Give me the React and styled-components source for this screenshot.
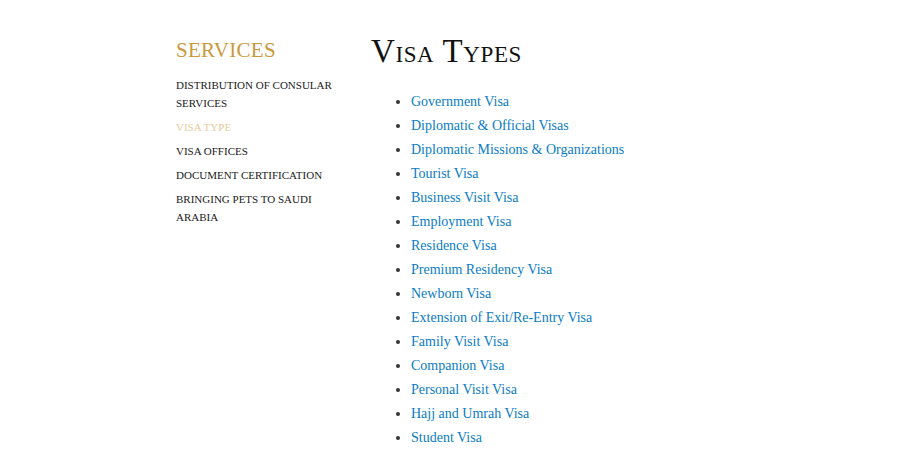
import React from 'react';
import styled, { createGlobalStyle } from 'styled-components';

const GlobalStyle = createGlobalStyle`
  body {
    margin: 0;
    background: #ffffff;
    font-family: 'Liberation Serif', 'Times New Roman', serif;
  }
`;

const Page = styled.div`
  display: flex;
  align-items: flex-start;
  padding: 36px 0 0 176px;
`;

const Sidebar = styled.aside`
  width: 170px;
  margin-right: 25px;
`;

const SidebarTitle = styled.h3`
  margin: 0 0 12px;
  font-family: 'Liberation Serif', serif;
  font-weight: 400;
  font-size: 21px;
  line-height: 28px;
  letter-spacing: 0.3px;
  color: #c99a3c;
  text-transform: uppercase;
`;

const NavList = styled.ul`
  list-style: none;
  margin: 0;
  padding: 0;
  display: flex;
  flex-direction: column;
  gap: 6px;
`;

const NavItem = styled.li`
  font-size: 11px;
  line-height: 18px;
  text-transform: uppercase;
  color: ${p => (p.$active ? '#e6cc9c' : '#1a1a1a')};
`;

const Main = styled.main`
  flex: 1;
`;

const Title = styled.h1`
  margin: 0 0 24px;
  font-family: 'Liberation Serif', serif;
  font-weight: 400;
  font-size: 33px;
  line-height: 30px;
  font-variant: small-caps;
  letter-spacing: 0.6px;
  color: #111;
`;

const VisaList = styled.ul`
  margin: 0;
  padding-left: 40px;
  color: #333;
`;

const VisaItem = styled.li`
  font-size: 14px;
  line-height: 24px;
`;

const VisaLink = styled.a`
  color: #0a7cc4;
  text-decoration: none;
`;

const navItems = [
  { label: 'Distribution of Consular Services' },
  { label: 'Visa Type', active: true },
  { label: 'Visa Offices' },
  { label: 'Document Certification' },
  { label: 'Bringing Pets to Saudi Arabia' },
];

const visaTypes = [
  'Government Visa',
  'Diplomatic & Official Visas',
  'Diplomatic Missions & Organizations',
  'Tourist Visa',
  'Business Visit Visa',
  'Employment Visa',
  'Residence Visa',
  'Premium Residency Visa',
  'Newborn Visa',
  'Extension of Exit/Re-Entry Visa',
  'Family Visit Visa',
  'Companion Visa',
  'Personal Visit Visa',
  'Hajj and Umrah Visa',
  'Student Visa',
];

const App = () => (
  <>
    <GlobalStyle />
    <Page>
      <Sidebar>
        <SidebarTitle>Services</SidebarTitle>
        <NavList>
          {navItems.map(item => (
            <NavItem key={item.label} $active={item.active}>
              {item.label}
            </NavItem>
          ))}
        </NavList>
      </Sidebar>
      <Main>
        <Title>Visa Types</Title>
        <VisaList>
          {visaTypes.map(v => (
            <VisaItem key={v}>
              <VisaLink href="#">{v}</VisaLink>
            </VisaItem>
          ))}
        </VisaList>
      </Main>
    </Page>
  </>
);

export default App;
